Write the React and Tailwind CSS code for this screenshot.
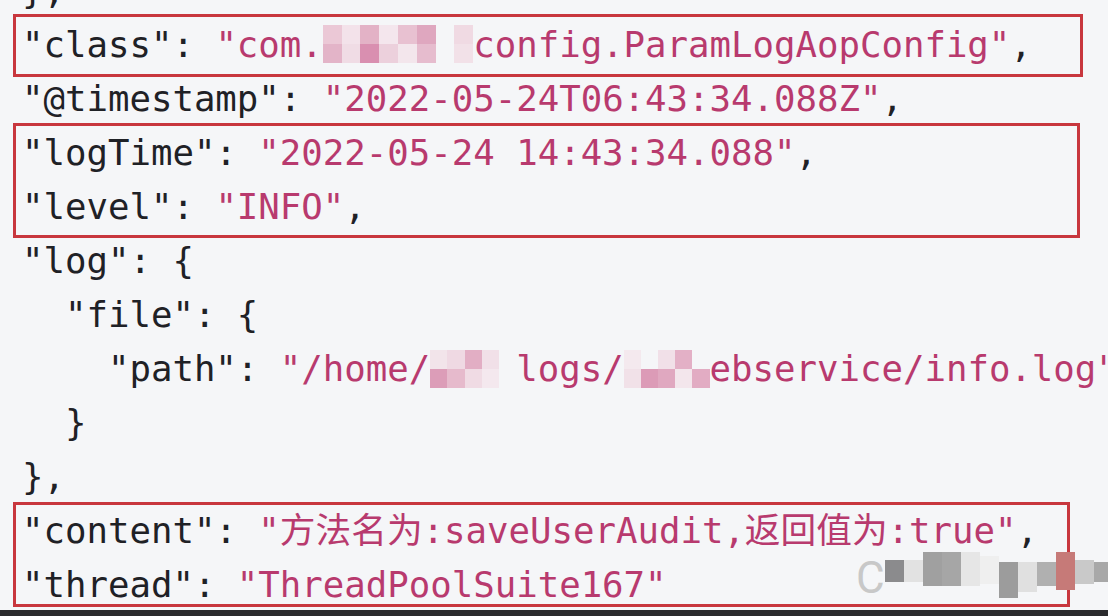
// JSON 日志片段，带红框标注
import React from 'react';

const mono = { fontFamily: '"DejaVu Sans Mono", "Noto Sans CJK SC", monospace' };

function K({ children }) {
  return <span className="text-[#1f2126]">{children}</span>;
}

function S({ children }) {
  return <span className="text-[#b83a6e]">{children}</span>;
}

// 打码马赛克块
function Mosaic({ chars, top = 7, rows }) {
  return (
    <span
      className="inline-block align-top h-[54px]"
      style={{ width: `${chars}ch`, paddingTop: top }}
    >
      <span className="flex flex-col w-full">
        {rows.map((row, i) => (
          <span key={i} className="flex w-full h-[19px]">
            {row.map((c, j) => (
              <span key={j} className="flex-1" style={{ background: c }} />
            ))}
          </span>
        ))}
      </span>
    </span>
  );
}

function Line({ children }) {
  return <div className="h-[54px] leading-[54px] whitespace-pre">{children}</div>;
}

function Boxed({ children, box }) {
  return (
    <div className="relative">
      {children}
      <span className={`absolute border-[3px] border-[#c8373e] pointer-events-none ${box}`} />
    </div>
  );
}

const watermark = [
  ['#8b8b8d', 10, 22],
  ['#e2e2e2', 10, 22],
  ['#a0a0a0', 2, 34],
  ['#a6a6a6', 2, 34],
  ['#e6e6e6', 2, 34],
  ['#efefef', 6, 28],
  ['#9c9c9c', 12, 36],
  ['#e0e0e0', 12, 30],
  ['#b0b0b0', 12, 24],
  ['#c67a78', 2, 38],
  ['#c9c9c9', 10, 24],
  ['#a8a8a8', 12, 20],
];

export default function App() {
  return (
    <div className="w-[1108px] h-[616px] overflow-hidden flex flex-col bg-[#f5f6f8]" style={mono}>
      <div className="relative flex-1 overflow-hidden">
        <div className="-mt-[36px] pl-[22px] text-[35.7px]">
          <Line><K>{'},'}</K></Line>
          <Boxed box="-top-[4px] -bottom-[5px] -left-[9px] right-[25px]">
            <Line>
              <K>{'"class": '}</K>
              <S>{'"com.'}</S>
              <Mosaic
                chars={7}
                rows={[
                  ['#ebc8d6', '#f3e2ea', '#e3b2c6', '#f4e6ed', '#e8c1d1', '#dfa7bf', '#f5f6f8', '#f0dae3'],
                  ['#e3b4c8', '#f0dce5', '#d98fb0', '#ecd0dc', '#f3e6ec', '#e6bcce', '#f5f6f8', '#f2e1e8'],
                ]}
              />
              <S>{'config.ParamLogAopConfig"'}</S>
              <K>,</K>
            </Line>
          </Boxed>
          <Line>
            <K>{'"@timestamp": '}</K>
            <S>{'"2022-05-24T06:43:34.088Z"'}</S>
            <K>,</K>
          </Line>
          <Boxed box="-top-[3px] -bottom-[4px] -left-[9px] right-[28px]">
            <Line>
              <K>{'"logTime": '}</K>
              <S>{'"2022-05-24 14:43:34.088"'}</S>
              <K>,</K>
            </Line>
            <Line>
              <K>{'"level": '}</K>
              <S>{'"INFO"'}</S>
              <K>,</K>
            </Line>
          </Boxed>
          <Line><K>{'"log": {'}</K></Line>
          <Line><K>{'  "file": {'}</K></Line>
          <Line>
            <K>{'    "path": '}</K>
            <S>{'"/home/'}</S>
            <Mosaic
              chars={4}
              top={8}
              rows={[
                ['#f2e4ea', '#efd9e3', '#e2aec4', '#f1e0e8', '#f5f6f8'],
                ['#dc9db8', '#e6bacc', '#f0dbe4', '#f4e8ee', '#f5f6f8'],
              ]}
            />
            <S>{'logs/'}</S>
            <Mosaic
              chars={4}
              top={8}
              rows={[
                ['#f4e9ee', '#f5f6f8', '#f1e0e8', '#e3b0c6', '#f5f6f8'],
                ['#f1e1e8', '#dc9bb7', '#e0a8c0', '#f3e6ec', '#e2acc3'],
              ]}
            />
            <S>{'ebservice/info.log"'}</S>
          </Line>
          <Line><K>{'  }'}</K></Line>
          <Line><K>{'},'}</K></Line>
          <Boxed box="-top-[2px] bottom-[5px] -left-[9px] right-[38px]">
            <Line>
              <K>{'"content": '}</K>
              <S>{'"方法名为:saveUserAudit,返回值为:true"'}</S>
              <K>,</K>
            </Line>
            <Line>
              <K>{'"thread": '}</K>
              <S>{'"ThreadPoolSuite167"'}</S>
            </Line>
          </Boxed>
        </div>

        {/* 水印 */}
        <div className="absolute left-[856px] top-[550px] flex items-start">
          <span className="text-[44px] leading-[44px] text-[#c8c8c8] mt-[6px]" style={{ fontFamily: 'Roboto, sans-serif' }}>C</span>
          {watermark.map(([c, t, h], i) => (
            <span key={i} className="w-[19px]" style={{ background: c, marginTop: t, height: h }} />
          ))}
        </div>
      </div>
      <div className="h-[6px] bg-[#2b2b2d]" />
    </div>
  );
}
